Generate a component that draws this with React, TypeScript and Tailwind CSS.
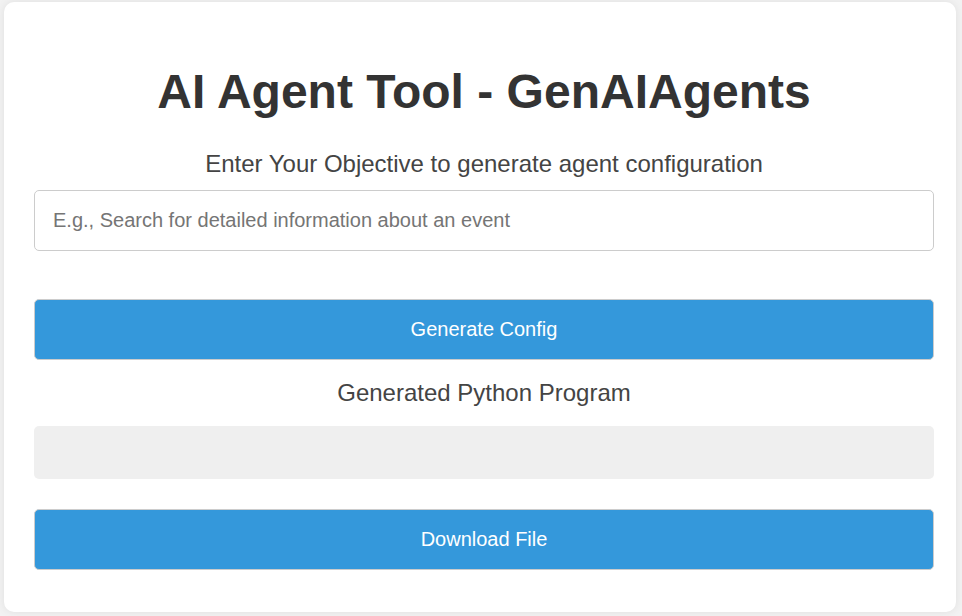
import React from 'react';

export default function App() {
  return (
    <div className="min-h-screen bg-[#f2f2f2] pt-[2px] pl-[4px] pr-[6px] pb-[4px] font-['Liberation_Sans',Arial,sans-serif]">
      <div className="bg-white rounded-[10px] shadow-[0_0_8px_rgba(0,0,0,0.08)] pt-[62px] pl-[30px] pr-[22px] pb-[40px] h-[610px]">
        {/* Title */}
        <h1 className="text-center text-[48px] leading-[56px] font-bold text-[#333]">
          AI Agent Tool - GenAIAgents
        </h1>
        <p className="mt-[30px] text-center text-[24px] leading-[28px] text-[#444]">
          Enter Your Objective to generate agent configuration
        </p>

        <input
          type="text"
          placeholder="E.g., Search for detailed information about an event"
          className="mt-[12px] block w-full h-[61px] px-[18px] border border-[#ccc] rounded-[5px] text-[20px] text-[#333] placeholder:text-[#757575] outline-none"
        />

        <button className="mt-[48px] block w-full h-[61px] rounded-[5px] bg-[#3498db] border border-[#ccc] text-white text-[20px] pb-[2px]">
          Generate Config
        </button>

        <p className="mt-[19px] text-center text-[24px] leading-[28px] text-[#444]">
          Generated Python Program
        </p>

        {/* Output area */}
        <div className="mt-[19px] h-[53px] rounded-[5px] bg-[#efefef]" />

        <button className="mt-[30px] block w-full h-[61px] rounded-[5px] bg-[#3498db] border border-[#ccc] text-white text-[20px] pb-[2px]">
          Download File
        </button>
      </div>
    </div>
  );
}
